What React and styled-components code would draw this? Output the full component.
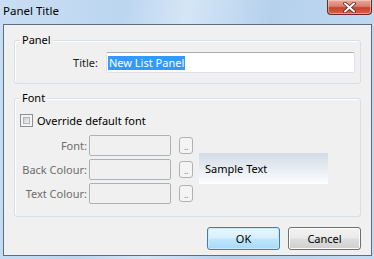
import React from 'react';
import styled, { createGlobalStyle } from 'styled-components';

const GlobalStyle = createGlobalStyle`
  html, body {
    margin: 0;
    padding: 0;
    background: #bcd4ec;
  }
  body {
    font-family: 'Noto Sans', 'Open Sans', sans-serif;
    font-size: 11px;
  }
`;

const Window = styled.div`
  width: 374px;
  height: 259px;
  display: flex;
  flex-direction: column;
  box-sizing: border-box;
  background: linear-gradient(100deg, #c9def3 0%, #bcd6f0 30%, #d4e6f6 45%, #b6d1ec 65%, #c3dbf2 100%);
`;

const TitleBar = styled.div`
  height: 24px;
  flex: none;
  display: flex;
  align-items: flex-start;
  justify-content: space-between;
`;

const Caption = styled.div`
  padding: 3px 0 0 3px;
  font-size: 11.5px;
  line-height: 16px;
  color: #000;
`;

const CloseButton = styled.div`
  width: 45px;
  height: 15px;
  margin-right: 2px;
  box-sizing: border-box;
  border: 1px solid #6b2a22;
  border-top: none;
  border-radius: 0 0 4px 4px;
  background: linear-gradient(#e9a99c 0%, #d8806f 45%, #c7432b 55%, #d4634a 100%);
  box-shadow: inset 0 0 0 1px rgba(255, 220, 210, 0.5);
  display: flex;
  align-items: center;
  justify-content: center;
`;

const Client = styled.div`
  flex: 1;
  margin: 0 2px 3px 3px;
  border: 1px solid #5d6e80;
  background: #f0f0f0;
  padding: 15px 10px 5px 10px;
  display: flex;
  flex-direction: column;
`;

const Group = styled.div`
  position: relative;
  border: 1px solid #d5dfe5;
  border-radius: 3px;
  box-shadow: inset 1px 1px 0 #fff;
  padding: ${p => p.$pad};
  margin-bottom: ${p => p.$mb || 0}px;
`;

const Legend = styled.span`
  position: absolute;
  top: -9px;
  left: 5px;
  padding: 0 2px;
  background: #f0f0f0;
  color: #000;
  line-height: 16px;
`;

const TitleRow = styled.div`
  display: grid;
  grid-template-columns: 78px 249px;
  column-gap: 8px;
  align-items: center;
`;

const Label = styled.label`
  text-align: right;
  color: ${p => (p.$disabled ? '#6d6d6d' : '#1e1e1e')};
  white-space: nowrap;
  line-height: 16px;
`;

const TextBox = styled.div`
  height: 21px;
  box-sizing: border-box;
  border: 1px solid #e2e3ea;
  border-top-color: #abadb3;
  background: #fff;
  border-radius: 2px;
  display: flex;
  align-items: center;
  padding-left: 1px;
`;

const Selected = styled.span`
  background: #3399ff;
  color: #fff;
  line-height: 14px;
  padding: 0 1px;
`;

const CheckRow = styled.div`
  display: flex;
  align-items: center;
  gap: 4px;
  height: 13px;
  margin-bottom: 8px;
`;

const CheckBox = styled.span`
  width: 13px;
  height: 13px;
  box-sizing: border-box;
  border: 1px solid #8e8f8f;
  background: #f4f4f4;
  display: flex;
  padding: 2px;
  &::after {
    content: '';
    flex: 1;
    border: 1px solid #b2b5b9;
    background: linear-gradient(135deg, #c6cbd1 0%, #e4e6e8 60%, #f2f2f2 100%);
  }
`;

const FontArea = styled.div`
  display: flex;
  align-items: flex-start;
`;

const FieldGrid = styled.div`
  display: grid;
  grid-template-columns: 67px 84px 14px;
  grid-auto-rows: 21px;
  row-gap: 3px;
  align-items: center;
`;

const DisabledBox = styled.div`
  height: 21px;
  box-sizing: border-box;
  margin-left: 2px;
  border: 1px solid #adb2b5;
  border-radius: 2px;
  background: #f0f0f0;
`;

const DotsButton = styled.div`
  width: 14px;
  height: 17px;
  box-sizing: border-box;
  margin-left: 8px;
  border: 1px solid #adb2b5;
  border-radius: 3px;
  background: #f4f4f4;
  color: #838383;
  font-size: 9px;
  line-height: 18px;
  text-align: center;
  letter-spacing: -0.5px;
`;

const Sample = styled.div`
  width: 129px;
  height: 31px;
  margin: 18px 0 0 14px;
  box-sizing: border-box;
  padding-left: 6px;
  background: linear-gradient(#d3dce7 0%, #e6ecf2 50%, #ffffff 100%);
  display: flex;
  align-items: center;
  color: #000;
`;

const ButtonRow = styled.div`
  display: flex;
  justify-content: flex-end;
  gap: 8px;
  margin-top: 10px;
`;

const Button = styled.div`
  width: 73px;
  height: 23px;
  box-sizing: border-box;
  border: 1px solid ${p => (p.$default ? '#3c7fb1' : '#707070')};
  border-radius: 3px;
  background: ${p =>
    p.$default
      ? 'linear-gradient(#eaf6fd 0%, #d9f0fc 45%, #bee6fd 55%, #a7d9f5 100%)'
      : 'linear-gradient(#f2f2f2 0%, #ebebeb 45%, #dddddd 55%, #cfcfcf 100%)'};
  box-shadow: ${p => (p.$default ? 'inset 0 0 0 1px #c8eafb' : 'inset 0 0 0 1px #fcfcfc')};
  display: flex;
  align-items: center;
  justify-content: center;
  color: #000;
`;

const fields = ['Font:', 'Back Colour:', 'Text Colour:'];

export default function App() {
  return (
    <>
      <GlobalStyle />
      <Window>
        <TitleBar>
          <Caption>Panel Title</Caption>
          <CloseButton>
            <svg width="13" height="11" viewBox="0 0 13 11">
              <path d="M2 1.5 L11 9.5 M11 1.5 L2 9.5" stroke="#5a231b" strokeWidth="3.6" strokeLinecap="round" />
              <path d="M2 1.5 L11 9.5 M11 1.5 L2 9.5" stroke="#fff" strokeWidth="2" strokeLinecap="round" />
            </svg>
          </CloseButton>
        </TitleBar>
        <Client>
          <Group $pad="11px 5px 10px 5px" $mb={14}>
            <Legend>Panel</Legend>
            <TitleRow>
              <Label>Title:</Label>
              <TextBox>
                <Selected>New List Panel</Selected>
              </TextBox>
            </TitleRow>
          </Group>
          <Group $pad="15px 5px 12px 5px">
            <Legend>Font</Legend>
            <CheckRow>
              <CheckBox />
              <span>Override default font</span>
            </CheckRow>
            <FontArea>
              <FieldGrid>
                {fields.map(f => (
                  <React.Fragment key={f}>
                    <Label $disabled>{f}</Label>
                    <DisabledBox />
                    <DotsButton>..</DotsButton>
                  </React.Fragment>
                ))}
              </FieldGrid>
              <Sample>Sample Text</Sample>
            </FontArea>
          </Group>
          <ButtonRow>
            <Button $default>OK</Button>
            <Button>Cancel</Button>
          </ButtonRow>
        </Client>
      </Window>
    </>
  );
}
